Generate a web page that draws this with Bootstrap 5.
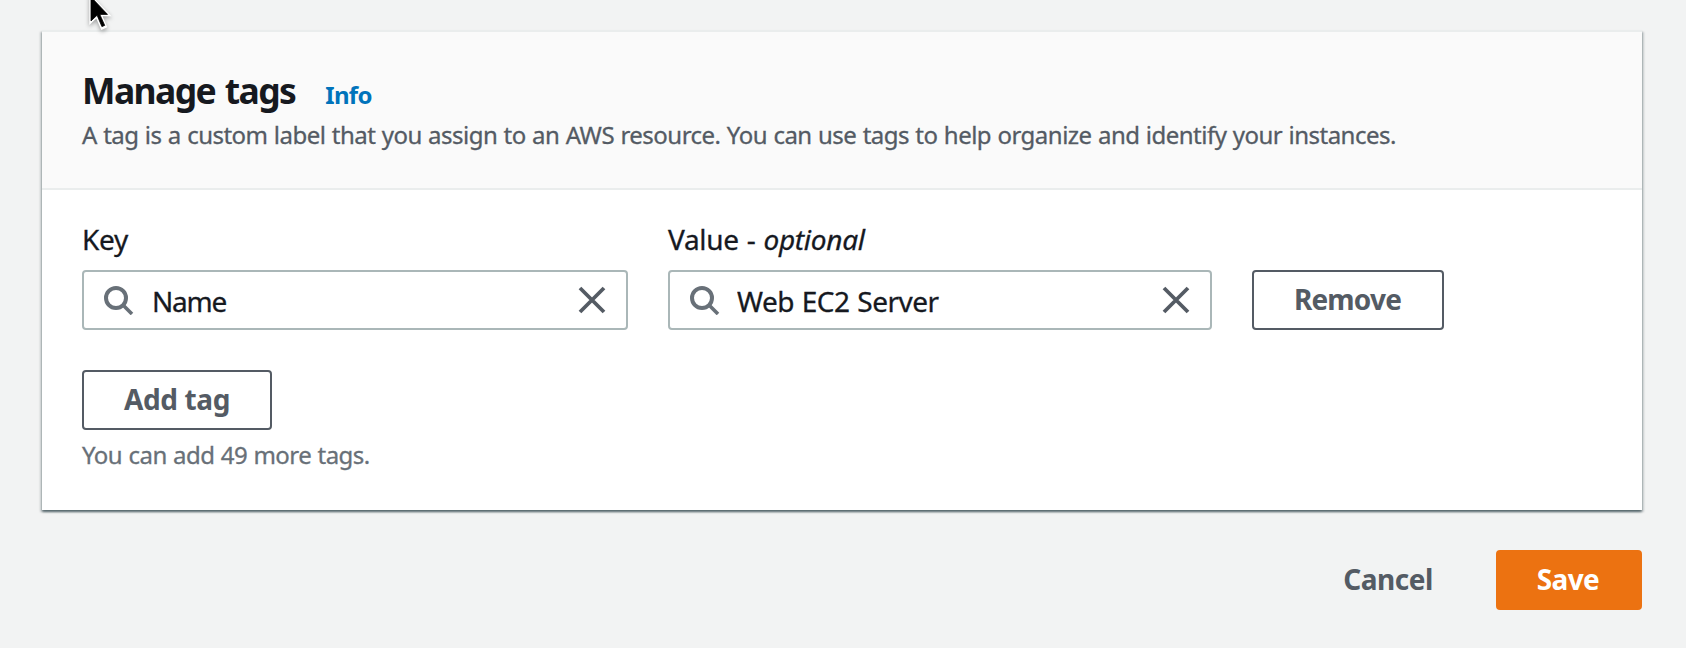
<!DOCTYPE html>
<html lang="en">
<head>
<meta charset="utf-8">
<meta name="viewport" content="width=device-width, initial-scale=1">
<title>Manage tags</title>
<link href="https://cdn.jsdelivr.net/npm/bootstrap@5.3.0/dist/css/bootstrap.min.css" rel="stylesheet">
<style>
  body { background: #f2f3f3; color: #16191f; font-family: "Noto Sans", sans-serif; font-size: 28px; line-height: 44px; overflow: hidden; }
  .page { padding: 30px 44px 0 42px; }
  .tag-panel { border: 0; border-top: 2px solid #eaeded; border-radius: 0; height: 480px; color: inherit;
    box-shadow: 0 2px 2px 0 rgba(0,28,36,.5), 2px 2px 2px 0 rgba(0,28,36,.15), -2px 2px 2px 0 rgba(0,28,36,.15); }
  .tag-panel .card-header { background: #fafafa; border-bottom: 2px solid #eaeded; border-radius: 0; padding: 36px 40px 0; height: 158px; }
  .tag-panel .card-body { padding: 27px 40px 0; }
  h1 { font-size: 35.5px; line-height: 44px; font-weight: 700; letter-spacing: -1.6px; word-spacing: 2px; }
  .info-link { font-size: 24px; font-weight: 700; color: #0073bb; letter-spacing: -.7px; margin-left: 30px; }
  .description { font-size: 24px; line-height: 36px; color: #545b64; margin: 0; letter-spacing: -.51px; word-spacing: .6px; white-space: nowrap; -webkit-text-stroke: .3px; }
  .tag-row { gap: 40px; }
  .key-field { width: 546px; }
  .value-field { width: 544px; }
  .form-label { margin-bottom: 9px; display: block; letter-spacing: -.3px; word-spacing: 1px; -webkit-text-stroke: .3px; }
  .search-box { height: 60px; border: 2px solid #aab7b8; border-radius: 4px; background: #fff; padding: 0 18px 0 20px; }
  .search-box input { font-size: 28px; line-height: 44px; color: #16191f; padding: 2px 0 0 17px; letter-spacing: -.5px; word-spacing: 1px; -webkit-text-stroke: .3px; }
  #key { letter-spacing: -1.2px; padding-left: 18px; }
  .console-btn { height: 60px; border: 2px solid #545b64; border-radius: 4px; color: #545b64; font-size: 28px; font-weight: 700; line-height: 44px; padding: 5px 0 7px; }
  .remove-btn { width: 192px; letter-spacing: -.8px; padding-right: 1px; }
  .add-btn { width: 190px; margin-top: 40px; letter-spacing: -.4px; }
  .hint { font-size: 24px; line-height: 36px; color: #687078; margin: 7px 0 0; letter-spacing: -.53px; word-spacing: .6px; -webkit-text-stroke: .3px; }
  .actions { margin-top: 40px; }
  .cancel-btn { border-color: transparent; width: 168px; letter-spacing: -.5px; margin-right: 24px; }
  .save-btn { width: 146px; background: #ec7211; border-color: #ec7211; color: #fff; letter-spacing: -.6px; padding-right: 2px; }
  .pointer { top: -8px; left: 84px; z-index: 5; filter: drop-shadow(0 2px 2px rgba(0,0,0,.35)); }
</style>
</head>
<body>
<svg class="pointer position-absolute" width="30" height="44" viewBox="0 0 30 44" aria-hidden="true">
  <path d="M5.3 1V33L12.3 26.6L17.3 38L23.4 35.2L18.6 24.3H27.6Z" fill="#fff"/>
  <path d="M7 5V28.9L13.1 23.2L17.9 34.6L20.7 33.4L15.8 22.4H23.5Z" fill="#000" stroke="#000" stroke-width=".8"/>
</svg>
<main class="page">
  <section class="card tag-panel">
    <div class="card-header">
      <div class="d-flex align-items-baseline">
        <h1 class="mb-0">Manage tags</h1>
        <a class="info-link text-decoration-none" href="#">Info</a>
      </div>
      <p class="description">A tag is a custom label that you assign to an AWS resource. You can use tags to help organize and identify your instances.</p>
    </div>
    <div class="card-body">
      <div class="tag-row d-flex align-items-end">
        <div class="key-field">
          <label class="form-label" for="key">Key</label>
          <div class="search-box d-flex align-items-center">
            <svg class="flex-shrink-0" width="30" height="30" viewBox="0 0 30 30" fill="none" stroke="#687078" stroke-width="4"><circle cx="12" cy="13" r="10"/><path d="M19 20L28 29" stroke-width="3.6"/></svg>
            <input id="key" class="form-control border-0 bg-transparent shadow-none" value="Name">
            <svg class="flex-shrink-0" width="30" height="30" viewBox="0 0 30 30" fill="none" stroke="#545b64" stroke-width="3.8"><path d="M2 3L26 27M26 3L2 27"/></svg>
          </div>
        </div>
        <div class="value-field">
          <label class="form-label" for="value">Value - <em>optional</em></label>
          <div class="search-box d-flex align-items-center">
            <svg class="flex-shrink-0" width="30" height="30" viewBox="0 0 30 30" fill="none" stroke="#687078" stroke-width="4"><circle cx="12" cy="13" r="10"/><path d="M19 20L28 29" stroke-width="3.6"/></svg>
            <input id="value" class="form-control border-0 bg-transparent shadow-none" value="Web EC2 Server">
            <svg class="flex-shrink-0" width="30" height="30" viewBox="0 0 30 30" fill="none" stroke="#545b64" stroke-width="3.8"><path d="M2 3L26 27M26 3L2 27"/></svg>
          </div>
        </div>
        <button class="btn console-btn remove-btn" type="button">Remove</button>
      </div>
      <button class="btn console-btn add-btn d-block" type="button">Add tag</button>
      <p class="hint">You can add 49 more tags.</p>
    </div>
  </section>
  <div class="actions d-flex justify-content-end">
    <button class="btn console-btn cancel-btn" type="button">Cancel</button>
    <button class="btn console-btn save-btn" type="submit">Save</button>
  </div>
</main>
<script src="https://cdn.jsdelivr.net/npm/bootstrap@5.3.0/dist/js/bootstrap.bundle.min.js"></script>
</body>
</html>
